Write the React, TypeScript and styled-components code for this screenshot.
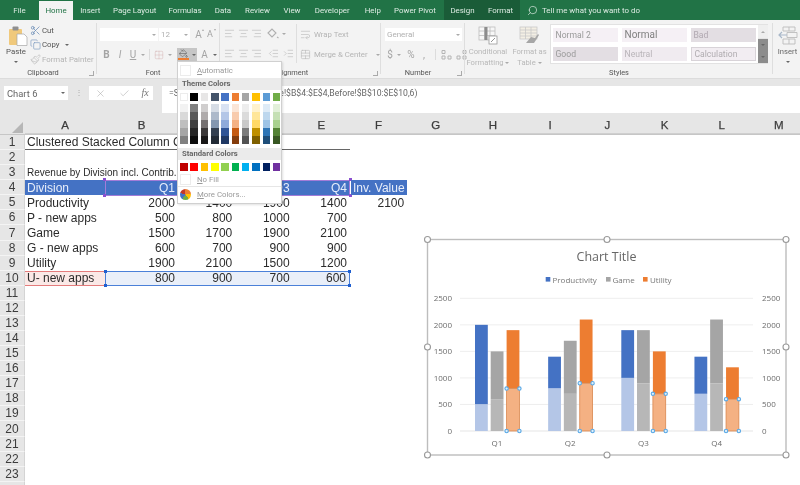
import React from "react";
import styled, { createGlobalStyle } from "styled-components";
import {
  AlignCenter, AlignLeft, AlignRight, Check, Copy, Indent, Outdent, PaintBucket, Paintbrush,
  Scissors, Search, TableCellsMerge, WrapText, X, Grid2x2,
} from "lucide-react";

const UI = `Roboto, "Noto Sans", sans-serif`;
const CHART = `"Open Sans", "Noto Sans", sans-serif`;
const CELL = `"Liberation Sans", Arial, sans-serif`;

const Global = createGlobalStyle`
  html, body { margin: 0; padding: 0; background: #fff; overflow: hidden; }
  #root { width: 800px; height: 485px; }
`;

const Page = styled.div`
  position: relative; width: 800px; height: 485px; overflow: hidden;
  display: flex; flex-direction: column; font-family: ${UI}; background: #fff;
  filter: blur(0.45px);
`;

/* ---------- tab bar ---------- */
const TabBar = styled.div`
  height: 20px; flex: none; display: flex; background: #217346; color: #dcebe2; font-size: 7.9px;
`;
const Tab = styled.div<{ $w: number; $active?: boolean }>`
  width: ${(p) => p.$w}px; flex: none; display: flex; align-items: center; justify-content: center;
  white-space: nowrap;
  ${(p) => p.$active && `background:#f3f3f3;color:#217346;margin-top:1px;`}
`;
const ContextTabs = styled.div`
  display: flex; margin-left: 2px; background: #1a5c38;
`;
const TellMe = styled.div`
  display: flex; align-items: center; gap: 4px; margin-left: 7px; white-space: nowrap;
`;

/* ---------- ribbon ---------- */
const Ribbon = styled.div`
  height: 59px; flex: none; display: flex; background: #f3f3f3; color: #a8a8a8; font-size: 8px;
  box-shadow: inset 0 -1px 0 #dcdcdc;
`;
const Group = styled.section<{ $w: number; $last?: boolean }>`
  width: ${(p) => p.$w}px; flex: none; display: flex; flex-direction: column; position: relative;
  box-sizing: border-box; height: 58px;
  ${(p) => !p.$last && `&::after { content: ""; position: absolute; right: 0; top: 3px; bottom: 4px; width: 1px; background: #dedede; }`}
`;
const GroupBody = styled.div`
  flex: 1; display: flex; min-height: 0;
`;
const GroupLabel = styled.div<{ $shift?: number }>`
  height: 11px; display: flex; align-items: center; justify-content: center;
  padding-right: ${(p) => p.$shift ?? 0}px;
  color: #555; font-size: 7.4px; line-height: 11px; white-space: nowrap;
`;
const Launcher = styled.span`
  position: absolute; right: 3px; bottom: 2px; width: 5px; height: 5px;
  border-right: 1px solid #aaa; border-bottom: 1px solid #aaa; box-sizing: border-box;
`;
const PasteButton = styled.div`
  width: 26px; margin-left: 3px; padding-top: 6px; display: flex; flex-direction: column; align-items: center;
  color: #555; line-height: 11px; font-size: 7.8px;
  & > svg { margin-left: 4px; }
`;
const SmallCol = styled.div`
  margin-left: 1px; padding-top: 3px; display: flex; flex-direction: column;
`;
const SmallRow = styled.div<{ $on?: boolean }>`
  height: 14.5px; display: flex; align-items: center; gap: 1px; white-space: nowrap;
  font-size: 7.8px; color: ${(p) => (p.$on ? "#555" : "#b4b4b4")};
`;
const Stack = styled.div<{ $gap?: number; $left?: number }>`
  display: flex; flex-direction: column; padding-top: 8px; gap: ${(p) => p.$gap ?? 7}px;
  padding-left: ${(p) => p.$left ?? 0}px;
`;
const AlignLeftCol = styled(Stack)`
  width: 74px; padding-top: 7px; gap: 7px; flex: none;
`;
const AlignRightCol = styled(Stack)`
  border-left: 1px solid #dedede; margin-top: 4px; padding-top: 3px; gap: 6px; padding-left: 3px; height: 36px;
`;
const ToolRow = styled.div`
  height: 13px; display: flex; align-items: center;
`;
const Field = styled.div<{ $w: number }>`
  width: ${(p) => p.$w}px; height: 13px; background: #fff; box-sizing: border-box; padding: 0 2px;
  display: flex; align-items: center; justify-content: space-between; margin-right: 1px; color: #b0b0b0; font-size: 8px;
`;
const Cellish = styled.span<{ $w: number; $sel?: boolean; $serif?: boolean; $lead?: number; $size?: number; $ink?: string }>`
  position: relative; width: ${(p) => p.$w}px; height: 13px; flex: none; display: inline-flex; flex-direction: column;
  align-items: center; justify-content: center; font-size: ${(p) => p.$size ?? 10}px; color: ${(p) => p.$ink ?? "#a4a4a4"}; line-height: 1;
  margin-left: ${(p) => p.$lead ?? 0}px;
  ${(p) => p.$sel && `background:#c6c6c6;color:#6c6c6c;`}
  ${(p) => p.$serif && `font-family:"Liberation Serif",serif;font-style:italic;`}
`;
const Caret = styled.span<{ $dark?: boolean; $top?: number; $lead?: number }>`
  display: inline-block; width: 0; height: 0; border-left: 2px solid transparent; border-right: 2px solid transparent;
  border-top: 2px solid ${(p) => (p.$dark ? "#666" : "#aaa")}; flex: none;
  margin-top: ${(p) => p.$top ?? 0}px; margin-left: ${(p) => p.$lead ?? 0}px; vertical-align: middle;
`;
const GrowMark = styled.span<{ $down?: boolean }>`
  position: absolute; right: 0; top: 1px; width: 0; height: 0; border-left: 1.5px solid transparent; border-right: 1.5px solid transparent;
  ${(p) => (p.$down ? "border-top: 2px solid #aaa;" : "border-bottom: 2px solid #aaa;")}
`;
const VSep = styled.span<{ $m?: number }>`
  width: 1px; height: 11px; background: #dcdcdc; margin: 0 ${(p) => p.$m ?? 2}px; flex: none;
`;
const Spacer = styled.span<{ $w: number }>`
  width: ${(p) => p.$w}px; flex: none;
`;
const FillBar = styled.span`
  width: 11px; height: 2.5px; background: #ed7d31;
`;
const BigButton = styled.div<{ $w: number; $on?: boolean; $lead?: number }>`
  width: ${(p) => p.$w}px; flex: none; display: flex; flex-direction: column; align-items: center;
  padding-top: 6px; font-size: 7.6px; line-height: 11px; color: ${(p) => (p.$on ? "#666" : "#b8b8b8")}; white-space: nowrap;
  margin-left: ${(p) => p.$lead ?? 0}px;
`;
const BigIcon = styled.div`
  height: 19px; margin-bottom: 1px;
`;
const Gallery = styled.div`
  width: 218px; height: 40px; margin: 4px 0 0 1px; box-sizing: border-box; display: flex; background: #fff;
  border: 1px solid #e2e2e2; flex: none;
`;
const StyleGrid = styled.div`
  flex: 1; display: grid; grid-template-columns: repeat(3, 65px); grid-auto-rows: 14.5px;
  column-gap: 4px; row-gap: 4.5px; padding: 2.5px 2px;
`;
const StyleCell = styled.div<{ $bg: string; $fg: string; $big?: boolean; $outline?: boolean }>`
  background: ${(p) => p.$bg}; color: ${(p) => p.$fg}; padding-left: 2.5px; display: flex; align-items: center;
  font-size: ${(p) => (p.$big ? 10 : 8.6)}px; white-space: nowrap; box-sizing: border-box;
  ${(p) => p.$outline && `border:1px solid #d8d3d8;`}
`;
const GalleryScroll = styled.div`
  width: 10px; flex: none; display: flex; flex-direction: column;
`;
const ScrollTop = styled.div`
  height: 13px; background: #efefef; display: flex; align-items: center; justify-content: center;
  border-bottom: 1px solid #e4e4e4;
`;
const ScrollRest = styled.div`
  flex: 1; background: #8c8c8c; display: flex; flex-direction: column; align-items: center; justify-content: space-around;
`;

/* ---------- formula bar ---------- */
const FormulaBand = styled.div`
  height: 34px; flex: none; background: #e6e6e6; display: flex; align-items: flex-start; padding-top: 7px; box-sizing: border-box;
`;
const NameBox = styled.div`
  width: 64px; height: 14px; margin-left: 4px; background: #fff; padding: 0 3px; box-sizing: border-box; display: flex;
  align-items: center; justify-content: space-between; font-size: 9.4px; color: #666; flex: none;
`;
const Dots = styled.div`
  width: 21px; flex: none; text-align: center; color: #aaa; font-size: 8px; line-height: 13px;
`;
const FxButtons = styled.div`
  width: 64px; height: 14px; background: #fff; flex: none; display: flex; align-items: center; color: #aaa;
`;
const FormulaInput = styled.div`
  margin-left: 9px; flex: 1; height: 27px; background: #fff; padding: 0 0 0 7px; font-size: 8.64px; line-height: 14px;
  color: #666; white-space: nowrap; overflow: hidden;
`;

/* ---------- sheet ---------- */
const Sheet = styled.div`
  flex: 1; display: grid; font-family: ${CELL}; font-size: 12px; color: #2b2b2b; min-height: 0;
  grid-template-columns: 25px 80px 73px 57.3px 57.3px 57.4px repeat(8, 57.2px);
  grid-template-rows: 22px repeat(24, 15.09px); background: #fff;
`;
const Corner = styled.div`
  background: #e6e6e6; position: relative; border-bottom: 1px solid #c6c6c6; box-sizing: border-box;
  &::after {
    content: ""; position: absolute; right: 2px; bottom: 1px; width: 11px; height: 11px;
    background: #b6b6b6; clip-path: polygon(100% 0, 100% 100%, 0 100%);
  }
`;
const ColHead = styled.div`
  background: #e6e6e6; border-bottom: 1px solid #c6c6c6; box-sizing: border-box; display: flex; align-items: flex-end;
  justify-content: center; padding-bottom: 2px; line-height: 13px; font-size: 11.5px; color: #3c3c3c;
  -webkit-text-stroke: 0.25px #3c3c3c; box-shadow: inset -1px -8px 0 -7px #cfcfcf;
`;
const RowHead = styled.div`
  background: #e6e6e6; border-right: 1px solid #d4d4d4; border-bottom: 1px solid #f4f4f4; box-sizing: border-box;
  display: flex; align-items: center; justify-content: center; font-size: 12px; color: #3c3c3c;
`;
type Tone = "plain" | "head" | "series" | "name";
const Cell = styled.div<{ $tone?: Tone; $right?: boolean; $line?: boolean; $small?: boolean; $first?: boolean; $last?: boolean; $gapped?: boolean }>`
  position: relative; box-sizing: border-box; white-space: nowrap; display: flex; align-items: center;
  padding: 0 3px 0 2px; justify-content: ${(p) => (p.$right ? "flex-end" : "flex-start")};
  font-size: ${(p) => (p.$small ? 10 : 12)}px;
  ${(p) => p.$gapped && `margin-left:1px;`}
  ${(p) => p.$line && `border-bottom:1px solid #666;`}
  ${(p) => p.$tone === "head" && `background:#4472c4;color:#e7eefa;`}
  ${(p) =>
    p.$tone === "series" &&
    `background:#e9eff9;border-top:1.5px solid #4a80d8;border-bottom:1.5px solid #4a80d8;
     ${p.$first ? "border-left:1.5px solid #4a80d8;" : ""}${p.$last ? "border-right:1.5px solid #4a80d8;" : ""}`}
  ${(p) => p.$tone === "name" && `background:#fbe9e7;border-top:1.5px solid #e47c7c;border-bottom:1.5px solid #e47c7c;`}
`;
const PurpleFrame = styled.span<{ $first?: boolean; $last?: boolean }>`
  position: absolute; inset: -0.5px 0; border-top: 1.5px solid #a27cd8; border-bottom: 1.5px solid #a27cd8; pointer-events: none;
  ${(p) => p.$first && `border-left:1.5px solid #a27cd8;`}
  ${(p) => p.$last && `border-right:1.5px solid #a27cd8;`}
`;
const Handle = styled.span<{ $c: string; $side: "l" | "r"; $v: "t" | "b" }>`
  position: absolute; width: 3px; height: 3px; background: ${(p) => p.$c};
  ${(p) => (p.$side === "l" ? "left:-2px;" : "right:-2px;")}
  ${(p) => (p.$v === "t" ? "top:-2px;" : "bottom:-2px;")}
`;

/* ---------- colour menu ---------- */
const Menu = styled.div`
  position: absolute; left: 177px; top: 61px; width: 105px; height: 143px; background: #fff; box-sizing: border-box;
  border: 1px solid #d0d0d0; box-shadow: 1px 1px 2px rgba(0,0,0,.12); font-size: 7.8px; color: #9a9a9a;
  display: flex; flex-direction: column;
`;
const MenuRow = styled.div<{ $h?: number; $top?: number }>`
  display: flex; align-items: center; gap: 6px; padding-left: 2px; flex: none;
  height: ${(p) => p.$h ?? 14}px; margin-top: ${(p) => p.$top ?? 0}px;
`;
const EmptyBox = styled.span`
  width: 11px; height: 11px; border: 1px solid #ececec; box-sizing: border-box; flex: none;
`;
const MenuHead = styled.div<{ $top?: number }>`
  height: 12px; background: #ebebeb; color: #666; font-weight: 700; font-size: 7.7px; line-height: 12px; padding-left: 4px; flex: none;
  margin-top: ${(p) => p.$top ?? 0}px;
`;
const Swatches = styled.div`
  display: grid; grid-template-columns: repeat(10, 7.6px); column-gap: 2.72px; padding-left: 2px; flex: none; margin-top: 3px;
`;
const Swatch = styled.span<{ $c: string; $ring?: boolean }>`
  display: block; height: 8px; background: ${(p) => p.$c};
  ${(p) => p.$ring && `box-shadow: inset 0 0 0 1px #ececec;`}
`;
const Wheel = styled.span`
  width: 11px; height: 11px; border-radius: 50%; flex: none;
  background: conic-gradient(#ed7d31 0 25%, #ffc000 25% 40%, #70ad47 40% 60%, #4472c4 60% 80%, #c0392b 80%);
`;
const MenuDivider = styled.div`
  height: 1px; background: #e6e6e6; flex: none;
`;
const Acc = styled.span`
  text-decoration: underline;
`;

/* ---------- chart ---------- */
const ChartSvg = styled.svg`
  position: absolute; left: 422px; top: 234px; width: 370px; height: 226px; font-family: ${CHART};
`;

const tabs: [string, number][] = [
  ["Insert", 34.5], ["Page Layout", 54.5], ["Formulas", 46], ["Data", 30], ["Review", 39], ["View", 30],
  ["Developer", 50.5], ["Help", 30.5], ["Power Pivot", 54],
];

const columns = ["A", "B", "C", "D", "E", "F", "G", "H", "I", "J", "K", "L", "M"];
const data: [string, number[], number?][] = [
  ["Productivity", [2000, 1400, 1900, 1400], 2100],
  ["P - new apps", [500, 800, 1000, 700]],
  ["Game", [1500, 1700, 1900, 2100]],
  ["G - new apps", [600, 700, 900, 900]],
  ["Utility", [1900, 2100, 1500, 1200]],
];
const lowU = [800, 900, 700, 600];

const theme = ["#ffffff", "#000000", "#e7e6e6", "#44546a", "#4472c4", "#ed7d31", "#a5a5a5", "#ffc000", "#5b9bd5", "#70ad47"];
const shades = [
  ["#f2f2f2", "#808080", "#d0cece", "#d6dce5", "#d9e2f3", "#fbe5d6", "#ededed", "#fff2cc", "#deebf7", "#e2f0d9"],
  ["#d9d9d9", "#595959", "#afabab", "#adb9ca", "#b4c6e7", "#f8cbad", "#dbdbdb", "#ffe699", "#bdd7ee", "#c5e0b4"],
  ["#bfbfbf", "#404040", "#767171", "#8497b0", "#8eaadb", "#f4b183", "#c9c9c9", "#ffd966", "#9dc3e6", "#a9d18e"],
  ["#a6a6a6", "#262626", "#3b3838", "#333f50", "#2f5496", "#c55a11", "#7b7b7b", "#bf9000", "#2e75b6", "#548235"],
  ["#808080", "#0d0d0d", "#181717", "#222a35", "#1f3864", "#843c0c", "#525252", "#7f6000", "#1f4e79", "#385723"],
];
const standard = ["#c00000", "#ff0000", "#ffc000", "#ffff00", "#92d050", "#00b050", "#00b0f0", "#0070c0", "#002060", "#7030a0"];

const Y0 = 431;
const K = 132.7 / 2500;
const yOf = (v: number) => Y0 - v * K;
const series = [
  { x: 475, w: 12.8, c: "#4472c4", l: "#b4c6e7", top: [2000, 1400, 1900, 1400], low: [500, 800, 1000, 700] },
  { x: 490.7, w: 12.8, c: "#a5a5a5", l: "#b7b7b7", top: [1500, 1700, 1900, 2100], low: [600, 700, 900, 900] },
  { x: 506.6, w: 12.8, c: "#ed7d31", l: "#f4b183", top: [1900, 2100, 1500, 1200], low: [800, 900, 700, 600] },
];
const STEP = 73.15;

const Chart = () => (
  <ChartSvg viewBox="422 234 370 226">
    <rect x="427.5" y="239.5" width="358.5" height="215.5" fill="#fff" stroke="#bdbdbd" strokeWidth="1.4" />
    <text x="606.5" y="260.5" textAnchor="middle" fontSize="12.5" fill="#666">Chart Title</text>
    <rect x="545.7" y="277" width="4.6" height="4.6" fill="#4472c4" />
    <text x="552.5" y="282.5" fontSize="8" fill="#777">Productivity</text>
    <rect x="606" y="277" width="4.6" height="4.6" fill="#a5a5a5" />
    <text x="612.5" y="282.5" fontSize="8" fill="#777">Game</text>
    <rect x="643" y="277" width="4.6" height="4.6" fill="#ed7d31" />
    <text x="650" y="282.5" fontSize="8" fill="#777">Utility</text>
    {[0, 500, 1000, 1500, 2000, 2500].map((v) => (
      <g key={v}>
        {v > 0 && <line x1="460" x2="753" y1={yOf(v)} y2={yOf(v)} stroke="#ececec" strokeWidth="0.9" />}
        <text x="452" y={yOf(v) + 3} textAnchor="end" fontSize="8" fill="#6c6c6c">{v}</text>
        <text x={762} y={yOf(v) + 3} fontSize="8" fill="#6c6c6c">{v}</text>
      </g>
    ))}
    <line x1="460" x2="753" y1={Y0} y2={Y0} stroke="#e2e2e2" strokeWidth="0.9" />
    {[0, 1, 2, 3].map((q) => (
      <g key={q}>
        {series.map((s, i) => (
          <g key={i}>
            <rect x={s.x + q * STEP} y={yOf(s.top[q])} width={s.w} height={(s.top[q] - s.low[q]) * K} fill={s.c} />
            <rect
              x={s.x + q * STEP} y={yOf(s.low[q])} width={s.w} height={s.low[q] * K} fill={s.l}
              stroke={i === 2 ? "#d9874f" : "none"} strokeWidth="0.8"
            />
          </g>
        ))}
        <text x={497 + q * 73.2} y="446" textAnchor="middle" fontSize="8" fill="#6c6c6c">{`Q${q + 1}`}</text>
        {[series[2].x, series[2].x + series[2].w].flatMap((hx) =>
          [yOf(series[2].low[q]), Y0].map((hy) => (
            <circle key={`${hx}-${hy}`} cx={hx + q * STEP} cy={hy} r="1.7" fill="#dff0fb" stroke="#5aa9e6" strokeWidth="1.1" />
          ))
        )}
      </g>
    ))}
    {[[427.5, 239.5], [607, 239.5], [786, 239.5], [427.5, 347], [786, 347], [427.5, 455], [607, 455], [786, 455]].map(([cx, cy]) => (
      <circle key={`${cx}-${cy}`} cx={cx} cy={cy} r="3" fill="#fff" stroke="#9a9a9a" strokeWidth="1.1" />
    ))}
  </ChartSvg>
);

const PasteIcon = () => (
  <svg width="19" height="20" viewBox="0 0 19 20">
    <rect x="0" y="3" width="13" height="16" rx="1" fill="#f0c97c" />
    <rect x="3.5" y="0.5" width="6" height="4" rx="1" fill="#8f8f8f" />
    <path d="M8 8h7l3 3v8.5H8z" fill="#fff" stroke="#a8a8a8" strokeWidth=".7" />
  </svg>
);
const CondIcon = () => (
  <svg width="22" height="19" viewBox="0 0 22 19" fill="none" stroke="#bdbdbd" strokeWidth=".8">
    <rect x="2" y="1" width="16" height="13" fill="#f7f7f7" />
    <path d="M2 5h16M2 9.5h16M7.5 1v13M13 1v13" />
    <rect x="7.5" y="1" width="3" height="13" fill="#8c8c8c" stroke="none" />
    <rect x="12" y="10" width="8" height="8" fill="#fff" stroke="#999" />
    <path d="M14 16l4-4" stroke="#777" />
  </svg>
);
const TableIcon = () => (
  <svg width="22" height="19" viewBox="0 0 22 19" fill="none" stroke="#c8c8c8" strokeWidth=".8">
    <rect x="1" y="1" width="17" height="12" fill="#f3efe4" />
    <path d="M1 4h17M1 7h17M1 10h17M6.5 1v12M12 1v12" />
    <path d="M7 17l5-6 4 1 3-4 1 1-3 5-2 3z" fill="#a6a6a6" stroke="none" />
  </svg>
);
const InsertIcon = () => (
  <svg width="20" height="19" viewBox="0 0 20 19" fill="none" stroke="#bcbcbc" strokeWidth=".9">
    <path d="M5 1h12v4H5zM5 13h12v5H5zM11 1v4M11 13v5M9 6.5h10v5H9z" />
    <path d="M1 9h8M4 6L1 9l3 3" stroke="#a9b8c9" strokeWidth="1.2" />
  </svg>
);
const DecIcon = ({ up }: { up?: boolean }) => (
  <svg width="12" height="11" viewBox="0 0 12 11" fill="none" stroke="#b4b4b4" strokeWidth="1">
    <path d={up ? "M1 1.5h3v3H1zM1 7h3v3H1zM7 7h3v3H7z" : "M8 1.5h3v3H8zM8 7h3v3H8zM2 7h3v3H2z"} />
  </svg>
);
const Orient = () => (
  <svg width="12" height="11" viewBox="0 0 12 11" fill="none" stroke="#b0b0b0" strokeWidth="1.1">
    <path d="M1 5l4-4 4 4-4 4zM10 9l1.5 1" />
  </svg>
);

export default function App() {
  const sm = { size: 11, strokeWidth: 1.3, color: "#b8b8b8" };
  return (
    <Page>
      <Global />
      <TabBar>
        <Tab $w={39}>File</Tab>
        <Tab $w={34} $active>Home</Tab>
        {tabs.map(([t, w]) => <Tab key={t} $w={w}>{t}</Tab>)}
        <ContextTabs>
          <Tab $w={37}>Design</Tab>
          <Tab $w={39}>Format</Tab>
        </ContextTabs>
        <TellMe><Search size={11} strokeWidth={1.5} style={{ transform: "scaleX(-1)" }} />Tell me what you want to do</TellMe>
      </TabBar>

      <Ribbon>
        <Group $w={97}>
          <GroupBody>
            <PasteButton>
              <PasteIcon />
              Paste
              <Caret $dark $top={4} />
            </PasteButton>
            <SmallCol>
              <SmallRow $on><Scissors size={11} strokeWidth={1.5} color="#5e83b0" />Cut</SmallRow>
              <SmallRow $on><Copy size={11} strokeWidth={1.5} color="#7f9cc0" />Copy <Caret $dark $lead={4} /></SmallRow>
              <SmallRow><Paintbrush {...sm} />Format Painter</SmallRow>
            </SmallCol>
          </GroupBody>
          <GroupLabel $shift={11}>Clipboard</GroupLabel>
          <Launcher />
        </Group>

        <Group $w={123}>
          <GroupBody>
            <Stack $left={3}>
              <ToolRow>
                <Field $w={58}><span /><Caret /></Field>
                <Field $w={31}>12<Caret /></Field>
                <Cellish $w={11} $lead={2}>A<GrowMark /></Cellish>
                <Cellish $w={12} $size={9}>A<GrowMark $down /></Cellish>
              </ToolRow>
              <ToolRow>
                <Cellish $w={13} style={{ fontWeight: 700 }}>B</Cellish>
                <Cellish $w={14} style={{ fontStyle: "italic" }}>I</Cellish>
                <Cellish $w={12} style={{ textDecoration: "underline" }}>U</Cellish>
                <Cellish $w={8}><Caret /></Cellish>
                <VSep $m={2} />
                <Cellish $w={14}><Grid2x2 size={10} strokeWidth={1} color="#d2a9a9" /></Cellish>
                <Cellish $w={7}><Caret /></Cellish>
                <Spacer $w={4} />
                <Cellish $w={13} $sel><PaintBucket size={9} strokeWidth={1.6} color="#5e5e5e" /><FillBar /></Cellish>
                <Cellish $w={7} $sel><Caret $dark /></Cellish>
                <Cellish $w={13} $lead={1}>A</Cellish>
                <Cellish $w={7}><Caret $dark /></Cellish>
              </ToolRow>
            </Stack>
          </GroupBody>
          <GroupLabel $shift={11}>Font</GroupLabel>
        </Group>

        <Group $w={161}>
          <GroupBody>
            <AlignLeftCol $left={2}>
              <ToolRow>
                <Cellish $w={14}><AlignLeft {...sm} /></Cellish>
                <Cellish $w={14}><AlignCenter {...sm} /></Cellish>
                <Cellish $w={13}><AlignRight {...sm} /></Cellish>
                <Spacer $w={3} />
                <Cellish $w={14}><Orient /></Cellish>
                <Cellish $w={7}><Caret /></Cellish>
              </ToolRow>
              <ToolRow>
                <Cellish $w={14}><AlignLeft {...sm} /></Cellish>
                <Cellish $w={14}><AlignCenter {...sm} /></Cellish>
                <Cellish $w={13}><AlignRight {...sm} /></Cellish>
                <Spacer $w={3} />
                <Cellish $w={14}><Outdent {...sm} /></Cellish>
                <Cellish $w={16}><Indent {...sm} /></Cellish>
              </ToolRow>
            </AlignLeftCol>
            <AlignRightCol>
              <SmallRow><WrapText {...sm} />&nbsp;Wrap Text</SmallRow>
              <SmallRow><TableCellsMerge {...sm} />&nbsp;Merge &amp; Center <Caret $lead={7} /></SmallRow>
            </AlignRightCol>
          </GroupBody>
          <GroupLabel $shift={18}>Alignment</GroupLabel>
          <Launcher />
        </Group>

        <Group $w={84}>
          <GroupBody>
            <Stack $left={4}>
              <ToolRow><Field $w={77}>General<Caret /></Field></ToolRow>
              <ToolRow>
                <Cellish $w={10}>$</Cellish>
                <Cellish $w={7}><Caret /></Cellish>
                <Spacer $w={3} />
                <Cellish $w={12}>%</Cellish>
                <Cellish $w={14}>,</Cellish>
                <VSep $m={4} />
                <Cellish $w={14}><DecIcon up /></Cellish>
                <Cellish $w={14}><DecIcon /></Cellish>
              </ToolRow>
            </Stack>
          </GroupBody>
          <GroupLabel $shift={10}>Number</GroupLabel>
          <Launcher />
        </Group>

        <Group $w={308}>
          <GroupBody>
            <BigButton $w={44} $lead={1}>
              <BigIcon><CondIcon /></BigIcon>
              Conditional
              <span>Formatting <Caret /></span>
            </BigButton>
            <BigButton $w={39}>
              <BigIcon><TableIcon /></BigIcon>
              Format as
              <span>Table <Caret /></span>
            </BigButton>
            <Gallery>
              <StyleGrid>
                <StyleCell $bg="#f5f0f5" $fg="#9a9a9a">Normal 2</StyleCell>
                <StyleCell $bg="#f5f0f5" $fg="#808080" $big>Normal</StyleCell>
                <StyleCell $bg="#e3dee3" $fg="#b0a8b0">Bad</StyleCell>
                <StyleCell $bg="#e3dee3" $fg="#9a9a9a">Good</StyleCell>
                <StyleCell $bg="#f0ebf0" $fg="#b8b4b8">Neutral</StyleCell>
                <StyleCell $bg="#f2edf2" $fg="#b0acb0" $outline>Calculation</StyleCell>
              </StyleGrid>
              <GalleryScroll>
                <ScrollTop><Caret style={{ transform: "rotate(180deg)" }} /></ScrollTop>
                <ScrollRest><Caret $dark /><Caret $dark /></ScrollRest>
              </GalleryScroll>
            </Gallery>
          </GroupBody>
          <GroupLabel>Styles</GroupLabel>
        </Group>

        <Group $w={27} $last>
          <BigButton $w={27} $on $lead={1}>
            <BigIcon><InsertIcon /></BigIcon>
            Insert
            <Caret $dark $top={4} />
          </BigButton>
        </Group>
      </Ribbon>

      <FormulaBand>
        <NameBox>Chart 6<Caret $dark /></NameBox>
        <Dots>⋮</Dots>
        <FxButtons>
          <Cellish $w={23}><X size={11} strokeWidth={1.2} color="#aaa" /></Cellish>
          <Cellish $w={25}><Check size={11} strokeWidth={1.2} color="#aaa" /></Cellish>
          <Cellish $w={16} $serif $ink="#777">fx</Cellish>
        </FxButtons>
        <FormulaInput>=SERIES(Before!$A$10,Before!$B$4:$E$4,Before!$B$10:$E$10,6)</FormulaInput>
      </FormulaBand>

      <Sheet>
        <Corner />
        {columns.map((c) => <ColHead key={c}>{c}</ColHead>)}

        <RowHead>1</RowHead>
        <Cell $line>Clustered Stacked Column Chart</Cell>
        <Cell $line /><Cell $line /><Cell $line /><Cell $line />
        {Array.from({ length: 8 }, (_, i) => <Cell key={i} />)}

        <RowHead>2</RowHead>
        {Array.from({ length: 13 }, (_, i) => <Cell key={i} />)}

        <RowHead>3</RowHead>
        <Cell $small>Revenue by Division incl. Contrib. of New Apps</Cell>
        {Array.from({ length: 12 }, (_, i) => <Cell key={i} />)}

        <RowHead>4</RowHead>
        <Cell $tone="head">Division</Cell>
        {["Q1", "Q2", "Q3", "Q4"].map((q, i) => (
          <Cell key={q} $tone="head" $right>
            {q}
            <PurpleFrame $first={i === 0} $last={i === 3} />
            {i === 0 && <><Handle $c="#8a4fd0" $side="l" $v="t" /><Handle $c="#8a4fd0" $side="l" $v="b" /></>}
            {i === 3 && <><Handle $c="#8a4fd0" $side="r" $v="t" /><Handle $c="#8a4fd0" $side="r" $v="b" /></>}
          </Cell>
        ))}
        <Cell $tone="head" $gapped>Inv. Value</Cell>
        {Array.from({ length: 7 }, (_, i) => <Cell key={i} />)}

        {data.flatMap(([name, vals, extra], r) => [
          <RowHead key={`h${r}`}>{r + 5}</RowHead>,
          <Cell key={`a${r}`}>{name}</Cell>,
          ...vals.map((v, i) => <Cell key={`v${r}-${i}`} $right>{v}</Cell>),
          <Cell key={`f${r}`} $right>{extra ?? ""}</Cell>,
          ...Array.from({ length: 7 }, (_, i) => <Cell key={`e${r}-${i}`} />),
        ])}

        <RowHead>10</RowHead>
        <Cell $tone="name">U- new apps</Cell>
        {lowU.map((v, i) => (
          <Cell key={v} $tone="series" $right $first={i === 0} $last={i === 3}>
            {v}
            {i === 0 && <><Handle $c="#1f5fd0" $side="l" $v="t" /><Handle $c="#1f5fd0" $side="l" $v="b" /></>}
            {i === 3 && <><Handle $c="#1f5fd0" $side="r" $v="t" /><Handle $c="#1f5fd0" $side="r" $v="b" /></>}
          </Cell>
        ))}
        {Array.from({ length: 8 }, (_, i) => <Cell key={i} />)}

        {Array.from({ length: 14 }, (_, i) => (
          <React.Fragment key={i}>
            <RowHead>{i < 13 ? i + 11 : ""}</RowHead>
            {Array.from({ length: 13 }, (_, j) => <Cell key={j} />)}
          </React.Fragment>
        ))}
      </Sheet>

      <Chart />

      <Menu>
        <MenuRow $h={16}><EmptyBox /><span><Acc>A</Acc>utomatic</span></MenuRow>
        <MenuHead>Theme Colors</MenuHead>
        <Swatches>
          {theme.map((c, i) => <Swatch key={i} $c={c} $ring={i === 0} />)}
        </Swatches>
        <Swatches>
          {shades.flat().map((c, i) => <Swatch key={i} $c={c} />)}
        </Swatches>
        <MenuHead $top={4}>Standard Colors</MenuHead>
        <Swatches>
          {standard.map((c) => <Swatch key={c} $c={c} />)}
        </Swatches>
        <MenuRow $top={1}><EmptyBox /><span><Acc>N</Acc>o Fill</span></MenuRow>
        <MenuDivider />
        <MenuRow><Wheel /><span><Acc>M</Acc>ore Colors...</span></MenuRow>
      </Menu>
    </Page>
  );
}
